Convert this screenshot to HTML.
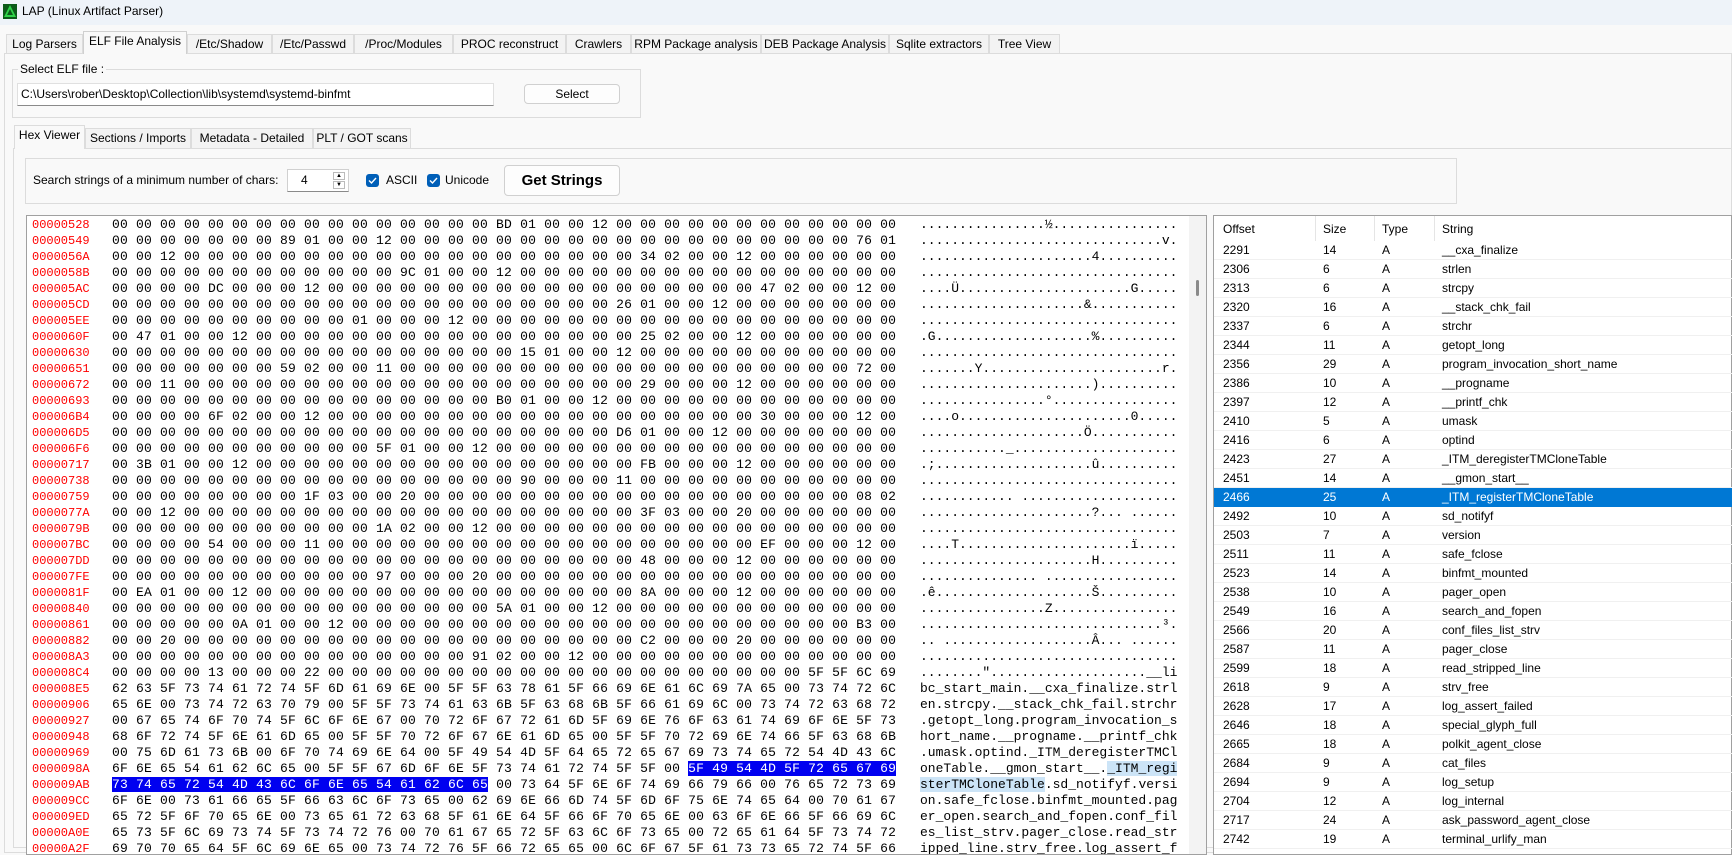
<!DOCTYPE html>
<html><head><meta charset="utf-8"><style>
*{margin:0;padding:0;box-sizing:border-box}
body{width:1732px;height:848px;overflow:hidden;background:#f9f9f9;font-family:"Liberation Sans",sans-serif;font-size:12px;color:#000;position:relative}
.a{position:absolute}
#title{left:0;top:0;width:1732px;height:25px;background:#eef3f9}
.tab{position:absolute;top:34px;height:19px;border:1px solid #dcdcdc;border-bottom:none;background:#f3f3f3;text-align:center;line-height:18px;font-size:12px}
.tab.sel{background:#f9f9f9;top:31px;height:23px;border-color:#d0d0d0}
.itab{position:absolute;top:128px;height:20px;border:1px solid #dcdcdc;border-bottom:none;background:#f3f3f3;text-align:center;line-height:19px}
.itab.sel{background:#f9f9f9;top:125px;height:24px}
pre{position:absolute;margin:0;line-height:16px;font-family:"Liberation Mono",monospace}
.hx{font-size:13px;letter-spacing:0.2px}
.hl{background:#0000f0;color:#fff}
.hl2{background:#cce4f7}
.tr{position:absolute;left:1214px;width:518px;height:19px;border-bottom:1px solid #f0f0f0;font-size:12px;line-height:18px}
.tr span{position:absolute}
.tr.sel{background:#0078d4;color:#fff;border-color:#0078d4}
.cb{position:absolute;width:13px;height:13px;background:#005fb8;border-radius:3px}
</style></head><body>
<div id="title" class="a"></div>
<svg class="a" style="left:3px;top:4px" width="14" height="15" viewBox="0 0 14 15"><rect width="14" height="15" fill="#0b5a1a"/><path d="M7 1 L13 13 H1 Z" fill="#2fd34a"/><path d="M7 5 L10 11 H4 Z" fill="#0b5a1a"/></svg>
<div class="a" style="left:22px;top:4px;font-size:12px">LAP (Linux Artifact Parser)</div>

<div class="a" style="left:4px;top:53px;width:1728px;height:800px;border:1px solid #dcdcdc;background:#f9f9f9"></div>
<div class="tab" style="left:6px;width:77px">Log Parsers</div>
<div class="tab sel" style="left:83px;width:104px">ELF File Analysis</div>
<div class="tab" style="left:187px;width:85px">/Etc/Shadow</div>
<div class="tab" style="left:272px;width:82px">/Etc/Passwd</div>
<div class="tab" style="left:354px;width:99px">/Proc/Modules</div>
<div class="tab" style="left:453px;width:113px">PROC reconstruct</div>
<div class="tab" style="left:566px;width:65px">Crawlers</div>
<div class="tab" style="left:631px;width:130px">RPM Package analysis</div>
<div class="tab" style="left:761px;width:128px">DEB Package Analysis</div>
<div class="tab" style="left:889px;width:100px">Sqlite extractors</div>
<div class="tab" style="left:989px;width:71px">Tree View</div>

<div class="a" style="left:12px;top:69px;width:629px;height:49px;border:1px solid #dcdcdc"></div>
<div class="a" style="left:18px;top:62px;background:#f9f9f9;padding:0 2px">Select ELF file :</div>
<div class="a" style="left:17px;top:83px;width:477px;height:23px;background:#fff;border:1px solid #e0e0e0;border-bottom:1px solid #8a8a8a;padding-left:3px;line-height:21px">C:\Users\rober\Desktop\Collection\lib\systemd\systemd-binfmt</div>
<div class="a" style="left:524px;top:84px;width:96px;height:20px;background:#fdfdfd;border:1px solid #d0d0d0;border-radius:4px;text-align:center;line-height:18px">Select</div>

<div class="a" style="left:13px;top:148px;width:1719px;height:700px;border:1px solid #dcdcdc;background:#f9f9f9"></div>
<div class="itab sel" style="left:14px;width:71px">Hex Viewer</div>
<div class="itab" style="left:85px;width:106px">Sections / Imports</div>
<div class="itab" style="left:191px;width:122px">Metadata - Detailed</div>
<div class="itab" style="left:313px;width:98px">PLT / GOT scans</div>

<div class="a" style="left:25px;top:158px;width:1432px;height:46px;border:1px solid #dcdcdc"></div>
<div class="a" style="left:33px;top:173px">Search strings of a minimum number of chars:</div>
<div class="a" style="left:287px;top:169px;width:62px;height:23px;background:#fff;border:1px solid #d0d0d0;border-bottom-color:#8a8a8a"></div>
<div class="a" style="left:301px;top:173px">4</div>
<div class="a" style="left:333px;top:172px;width:12px;height:8px;border:1px solid #bbb;font-size:6px;line-height:6px;text-align:center">▲</div>
<div class="a" style="left:333px;top:181px;width:12px;height:8px;border:1px solid #bbb;font-size:6px;line-height:6px;text-align:center">▼</div>
<div class="cb" style="left:366px;top:174px"><svg width="13" height="13"><path d="M3 6.5 L5.5 9 L10 4" stroke="#fff" stroke-width="1.4" fill="none"/></svg></div>
<div class="a" style="left:386px;top:173px">ASCII</div>
<div class="cb" style="left:427px;top:174px"><svg width="13" height="13"><path d="M3 6.5 L5.5 9 L10 4" stroke="#fff" stroke-width="1.4" fill="none"/></svg></div>
<div class="a" style="left:445px;top:173px">Unicode</div>
<div class="a" style="left:504px;top:165px;width:116px;height:31px;background:#fdfdfd;border:1px solid #d0d0d0;border-radius:4px;text-align:center;line-height:29px;font-weight:bold;font-size:15px">Get Strings</div>

<div class="a" style="left:26px;top:215px;width:1181px;height:640px;background:#fff;border:1px solid #a0a0a0;overflow:hidden">
<pre style="left:5px;top:1px;color:#f00;font-size:12px">00000528
00000549
0000056A
0000058B
000005AC
000005CD
000005EE
0000060F
00000630
00000651
00000672
00000693
000006B4
000006D5
000006F6
00000717
00000738
00000759
0000077A
0000079B
000007BC
000007DD
000007FE
0000081F
00000840
00000861
00000882
000008A3
000008C4
000008E5
00000906
00000927
00000948
00000969
0000098A
000009AB
000009CC
000009ED
00000A0E
00000A2F</pre>
<pre class="hx" style="left:85px;top:1px">00 00 00 00 00 00 00 00 00 00 00 00 00 00 00 00 BD 01 00 00 12 00 00 00 00 00 00 00 00 00 00 00 00
00 00 00 00 00 00 00 89 01 00 00 12 00 00 00 00 00 00 00 00 00 00 00 00 00 00 00 00 00 00 00 76 01
00 00 12 00 00 00 00 00 00 00 00 00 00 00 00 00 00 00 00 00 00 00 34 02 00 00 12 00 00 00 00 00 00
00 00 00 00 00 00 00 00 00 00 00 00 9C 01 00 00 12 00 00 00 00 00 00 00 00 00 00 00 00 00 00 00 00
00 00 00 00 DC 00 00 00 12 00 00 00 00 00 00 00 00 00 00 00 00 00 00 00 00 00 00 47 02 00 00 12 00
00 00 00 00 00 00 00 00 00 00 00 00 00 00 00 00 00 00 00 00 00 26 01 00 00 12 00 00 00 00 00 00 00
00 00 00 00 00 00 00 00 00 00 01 00 00 00 12 00 00 00 00 00 00 00 00 00 00 00 00 00 00 00 00 00 00
00 47 01 00 00 12 00 00 00 00 00 00 00 00 00 00 00 00 00 00 00 00 25 02 00 00 12 00 00 00 00 00 00
00 00 00 00 00 00 00 00 00 00 00 00 00 00 00 00 00 15 01 00 00 12 00 00 00 00 00 00 00 00 00 00 00
00 00 00 00 00 00 00 59 02 00 00 11 00 00 00 00 00 00 00 00 00 00 00 00 00 00 00 00 00 00 00 72 00
00 00 11 00 00 00 00 00 00 00 00 00 00 00 00 00 00 00 00 00 00 00 29 00 00 00 12 00 00 00 00 00 00
00 00 00 00 00 00 00 00 00 00 00 00 00 00 00 00 B0 01 00 00 12 00 00 00 00 00 00 00 00 00 00 00 00
00 00 00 00 6F 02 00 00 12 00 00 00 00 00 00 00 00 00 00 00 00 00 00 00 00 00 00 30 00 00 00 12 00
00 00 00 00 00 00 00 00 00 00 00 00 00 00 00 00 00 00 00 00 00 D6 01 00 00 12 00 00 00 00 00 00 00
00 00 00 00 00 00 00 00 00 00 00 5F 01 00 00 12 00 00 00 00 00 00 00 00 00 00 00 00 00 00 00 00 00
00 3B 01 00 00 12 00 00 00 00 00 00 00 00 00 00 00 00 00 00 00 00 FB 00 00 00 12 00 00 00 00 00 00
00 00 00 00 00 00 00 00 00 00 00 00 00 00 00 00 00 90 00 00 00 11 00 00 00 00 00 00 00 00 00 00 00
00 00 00 00 00 00 00 00 1F 03 00 00 20 00 00 00 00 00 00 00 00 00 00 00 00 00 00 00 00 00 00 08 02
00 00 12 00 00 00 00 00 00 00 00 00 00 00 00 00 00 00 00 00 00 00 3F 03 00 00 20 00 00 00 00 00 00
00 00 00 00 00 00 00 00 00 00 00 1A 02 00 00 12 00 00 00 00 00 00 00 00 00 00 00 00 00 00 00 00 00
00 00 00 00 54 00 00 00 11 00 00 00 00 00 00 00 00 00 00 00 00 00 00 00 00 00 00 EF 00 00 00 12 00
00 00 00 00 00 00 00 00 00 00 00 00 00 00 00 00 00 00 00 00 00 00 48 00 00 00 12 00 00 00 00 00 00
00 00 00 00 00 00 00 00 00 00 00 97 00 00 00 20 00 00 00 00 00 00 00 00 00 00 00 00 00 00 00 00 00
00 EA 01 00 00 12 00 00 00 00 00 00 00 00 00 00 00 00 00 00 00 00 8A 00 00 00 12 00 00 00 00 00 00
00 00 00 00 00 00 00 00 00 00 00 00 00 00 00 00 5A 01 00 00 12 00 00 00 00 00 00 00 00 00 00 00 00
00 00 00 00 00 0A 01 00 00 12 00 00 00 00 00 00 00 00 00 00 00 00 00 00 00 00 00 00 00 00 00 B3 00
00 00 20 00 00 00 00 00 00 00 00 00 00 00 00 00 00 00 00 00 00 00 C2 00 00 00 20 00 00 00 00 00 00
00 00 00 00 00 00 00 00 00 00 00 00 00 00 00 91 02 00 00 12 00 00 00 00 00 00 00 00 00 00 00 00 00
00 00 00 00 13 00 00 00 22 00 00 00 00 00 00 00 00 00 00 00 00 00 00 00 00 00 00 00 00 5F 5F 6C 69
62 63 5F 73 74 61 72 74 5F 6D 61 69 6E 00 5F 5F 63 78 61 5F 66 69 6E 61 6C 69 7A 65 00 73 74 72 6C
65 6E 00 73 74 72 63 70 79 00 5F 5F 73 74 61 63 6B 5F 63 68 6B 5F 66 61 69 6C 00 73 74 72 63 68 72
00 67 65 74 6F 70 74 5F 6C 6F 6E 67 00 70 72 6F 67 72 61 6D 5F 69 6E 76 6F 63 61 74 69 6F 6E 5F 73
68 6F 72 74 5F 6E 61 6D 65 00 5F 5F 70 72 6F 67 6E 61 6D 65 00 5F 5F 70 72 69 6E 74 66 5F 63 68 6B
00 75 6D 61 73 6B 00 6F 70 74 69 6E 64 00 5F 49 54 4D 5F 64 65 72 65 67 69 73 74 65 72 54 4D 43 6C
6F 6E 65 54 61 62 6C 65 00 5F 5F 67 6D 6F 6E 5F 73 74 61 72 74 5F 5F 00 <span class="hl">5F 49 54 4D 5F 72 65 67 69</span>
<span class="hl">73 74 65 72 54 4D 43 6C 6F 6E 65 54 61 62 6C 65</span> 00 73 64 5F 6E 6F 74 69 66 79 66 00 76 65 72 73 69
6F 6E 00 73 61 66 65 5F 66 63 6C 6F 73 65 00 62 69 6E 66 6D 74 5F 6D 6F 75 6E 74 65 64 00 70 61 67
65 72 5F 6F 70 65 6E 00 73 65 61 72 63 68 5F 61 6E 64 5F 66 6F 70 65 6E 00 63 6F 6E 66 5F 66 69 6C
65 73 5F 6C 69 73 74 5F 73 74 72 76 00 70 61 67 65 72 5F 63 6C 6F 73 65 00 72 65 61 64 5F 73 74 72
69 70 70 65 64 5F 6C 69 6E 65 00 73 74 72 76 5F 66 72 65 65 00 6C 6F 67 5F 61 73 73 65 72 74 5F 66</pre>
<pre style="left:893px;top:1px;font-size:13px">................½................
...............................v.
......................4..........
.................................
....Ü......................G.....
.....................&...........
.................................
.G....................%..........
.................................
.......Y.......................r.
......................)..........
................°................
....o......................0.....
.....................Ö...........
..........._.....................
.;....................û..........
.................................
............ ....................
......................?... ......
.................................
....T......................ï.....
......................H..........
............... .................
.ê....................Š..........
................Z................
...............................³.
.. ...................Â... ......
.................................
........"....................__li
bc_start_main.__cxa_finalize.strl
en.strcpy.__stack_chk_fail.strchr
.getopt_long.program_invocation_s
hort_name.__progname.__printf_chk
.umask.optind._ITM_deregisterTMCl
oneTable.__gmon_start__.<span class="hl2">_ITM_regi</span>
<span class="hl2">sterTMCloneTable</span>.sd_notifyf.versi
on.safe_fclose.binfmt_mounted.pag
er_open.search_and_fopen.conf_fil
es_list_strv.pager_close.read_str
ipped_line.strv_free.log_assert_f</pre>
<div class="a" style="left:1162px;top:0;width:18px;height:640px;background:#f3f3f3"></div>
<div class="a" style="left:1169px;top:64px;width:3px;height:16px;background:#8a8a8a;border-radius:2px"></div>
</div>

<div class="a" style="left:1213px;top:215px;width:519px;height:640px;background:#fff;border:1px solid #a0a0a0"></div>
<div class="a" style="left:1214px;top:216px;width:518px;height:25px;font-size:12px;line-height:26px">
<span class="a" style="left:9px">Offset</span><span class="a" style="left:101px;top:0;height:25px;border-left:1px solid #e5e5e5"></span>
<span class="a" style="left:109px">Size</span><span class="a" style="left:160px;top:0;height:25px;border-left:1px solid #e5e5e5"></span>
<span class="a" style="left:168px">Type</span><span class="a" style="left:220px;top:0;height:25px;border-left:1px solid #e5e5e5"></span>
<span class="a" style="left:228px">String</span></div>
<div class="tr" style="top:241px"><span style="left:9px">2291</span><span style="left:109px">14</span><span style="left:168px">A</span><span style="left:228px">__cxa_finalize</span></div>
<div class="tr" style="top:260px"><span style="left:9px">2306</span><span style="left:109px">6</span><span style="left:168px">A</span><span style="left:228px">strlen</span></div>
<div class="tr" style="top:279px"><span style="left:9px">2313</span><span style="left:109px">6</span><span style="left:168px">A</span><span style="left:228px">strcpy</span></div>
<div class="tr" style="top:298px"><span style="left:9px">2320</span><span style="left:109px">16</span><span style="left:168px">A</span><span style="left:228px">__stack_chk_fail</span></div>
<div class="tr" style="top:317px"><span style="left:9px">2337</span><span style="left:109px">6</span><span style="left:168px">A</span><span style="left:228px">strchr</span></div>
<div class="tr" style="top:336px"><span style="left:9px">2344</span><span style="left:109px">11</span><span style="left:168px">A</span><span style="left:228px">getopt_long</span></div>
<div class="tr" style="top:355px"><span style="left:9px">2356</span><span style="left:109px">29</span><span style="left:168px">A</span><span style="left:228px">program_invocation_short_name</span></div>
<div class="tr" style="top:374px"><span style="left:9px">2386</span><span style="left:109px">10</span><span style="left:168px">A</span><span style="left:228px">__progname</span></div>
<div class="tr" style="top:393px"><span style="left:9px">2397</span><span style="left:109px">12</span><span style="left:168px">A</span><span style="left:228px">__printf_chk</span></div>
<div class="tr" style="top:412px"><span style="left:9px">2410</span><span style="left:109px">5</span><span style="left:168px">A</span><span style="left:228px">umask</span></div>
<div class="tr" style="top:431px"><span style="left:9px">2416</span><span style="left:109px">6</span><span style="left:168px">A</span><span style="left:228px">optind</span></div>
<div class="tr" style="top:450px"><span style="left:9px">2423</span><span style="left:109px">27</span><span style="left:168px">A</span><span style="left:228px">_ITM_deregisterTMCloneTable</span></div>
<div class="tr" style="top:469px"><span style="left:9px">2451</span><span style="left:109px">14</span><span style="left:168px">A</span><span style="left:228px">__gmon_start__</span></div>
<div class="tr sel" style="top:488px"><span style="left:9px">2466</span><span style="left:109px">25</span><span style="left:168px">A</span><span style="left:228px">_ITM_registerTMCloneTable</span></div>
<div class="tr" style="top:507px"><span style="left:9px">2492</span><span style="left:109px">10</span><span style="left:168px">A</span><span style="left:228px">sd_notifyf</span></div>
<div class="tr" style="top:526px"><span style="left:9px">2503</span><span style="left:109px">7</span><span style="left:168px">A</span><span style="left:228px">version</span></div>
<div class="tr" style="top:545px"><span style="left:9px">2511</span><span style="left:109px">11</span><span style="left:168px">A</span><span style="left:228px">safe_fclose</span></div>
<div class="tr" style="top:564px"><span style="left:9px">2523</span><span style="left:109px">14</span><span style="left:168px">A</span><span style="left:228px">binfmt_mounted</span></div>
<div class="tr" style="top:583px"><span style="left:9px">2538</span><span style="left:109px">10</span><span style="left:168px">A</span><span style="left:228px">pager_open</span></div>
<div class="tr" style="top:602px"><span style="left:9px">2549</span><span style="left:109px">16</span><span style="left:168px">A</span><span style="left:228px">search_and_fopen</span></div>
<div class="tr" style="top:621px"><span style="left:9px">2566</span><span style="left:109px">20</span><span style="left:168px">A</span><span style="left:228px">conf_files_list_strv</span></div>
<div class="tr" style="top:640px"><span style="left:9px">2587</span><span style="left:109px">11</span><span style="left:168px">A</span><span style="left:228px">pager_close</span></div>
<div class="tr" style="top:659px"><span style="left:9px">2599</span><span style="left:109px">18</span><span style="left:168px">A</span><span style="left:228px">read_stripped_line</span></div>
<div class="tr" style="top:678px"><span style="left:9px">2618</span><span style="left:109px">9</span><span style="left:168px">A</span><span style="left:228px">strv_free</span></div>
<div class="tr" style="top:697px"><span style="left:9px">2628</span><span style="left:109px">17</span><span style="left:168px">A</span><span style="left:228px">log_assert_failed</span></div>
<div class="tr" style="top:716px"><span style="left:9px">2646</span><span style="left:109px">18</span><span style="left:168px">A</span><span style="left:228px">special_glyph_full</span></div>
<div class="tr" style="top:735px"><span style="left:9px">2665</span><span style="left:109px">18</span><span style="left:168px">A</span><span style="left:228px">polkit_agent_close</span></div>
<div class="tr" style="top:754px"><span style="left:9px">2684</span><span style="left:109px">9</span><span style="left:168px">A</span><span style="left:228px">cat_files</span></div>
<div class="tr" style="top:773px"><span style="left:9px">2694</span><span style="left:109px">9</span><span style="left:168px">A</span><span style="left:228px">log_setup</span></div>
<div class="tr" style="top:792px"><span style="left:9px">2704</span><span style="left:109px">12</span><span style="left:168px">A</span><span style="left:228px">log_internal</span></div>
<div class="tr" style="top:811px"><span style="left:9px">2717</span><span style="left:109px">24</span><span style="left:168px">A</span><span style="left:228px">ask_password_agent_close</span></div>
<div class="tr" style="top:830px"><span style="left:9px">2742</span><span style="left:109px">19</span><span style="left:168px">A</span><span style="left:228px">terminal_urlify_man</span></div>
</body></html>
